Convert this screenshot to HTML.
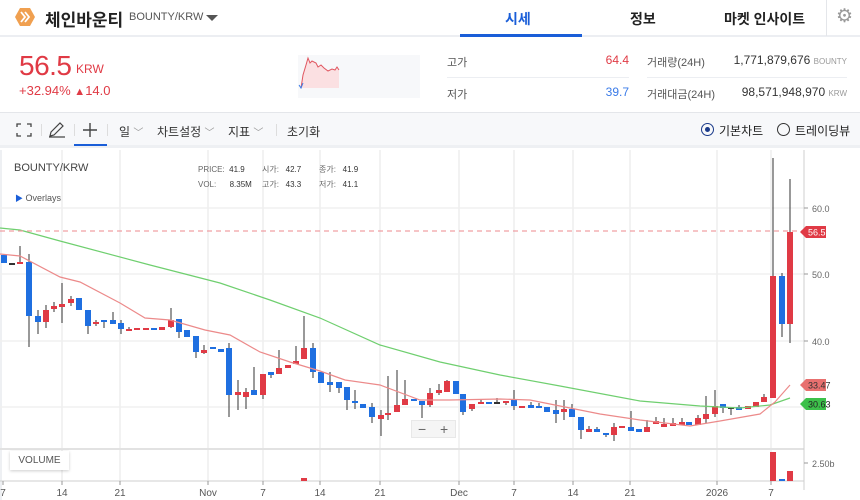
<!DOCTYPE html>
<html><head><meta charset="utf-8"><style>
*{margin:0;padding:0;box-sizing:border-box}
body{width:860px;height:500px;overflow:hidden;background:#fff;font-family:"Liberation Sans","Noto Sans CJK KR",sans-serif;color:#333;position:relative}
.a{position:absolute;white-space:nowrap}
</style></head><body>
<!-- header -->
<div class="a" style="left:0;top:0;width:860px;height:37px;border-bottom:2px solid #eceef2"></div>
<svg class="a" style="left:14px;top:6px" width="22" height="22" viewBox="0 0 22 22"><polygon points="6,2 16,2 21,11 16,20 6,20 1,11" fill="#f0a050"/><path d="M7 6l4 5-4 5M11 6l4 5-4 5" stroke="#fff" stroke-width="1.8" fill="none"/></svg>
<div class="a" style="left:45px;top:6px;font-size:17px;font-weight:bold;color:#222">체인바운티</div>
<div class="a" style="left:129px;top:11px;font-size:11px;color:#555">BOUNTY/KRW</div>
<div class="a" style="left:206px;top:15px;width:0;height:0;border-left:6px solid transparent;border-right:6px solid transparent;border-top:6px solid #555"></div>
<div class="a" style="left:505px;top:9px;font-size:14px;font-weight:bold;color:#1a5ed8">시세</div>
<div class="a" style="left:460px;top:34px;width:122px;height:3px;background:#1a5ed8"></div>
<div class="a" style="left:630px;top:9px;font-size:14px;font-weight:bold;color:#222">정보</div>
<div class="a" style="left:724px;top:9px;font-size:14px;font-weight:bold;color:#222">마켓 인사이트</div>
<div class="a" style="left:826px;top:0;width:1px;height:36px;background:#e4e6ea"></div>
<div class="a" style="left:836px;top:5px;font-size:19px;color:#999">⚙</div>
<!-- price -->
<div class="a" style="left:19px;top:50px;font-size:28px;color:#e03a45;letter-spacing:-0.5px">56.5</div>
<div class="a" style="left:76px;top:62px;font-size:12px;color:#e03a45">KRW</div>
<div class="a" style="left:19px;top:83px;font-size:13px;color:#e03a45">+32.94% <span style="font-size:11px">▲</span>14.0</div>
<svg class="a" style="left:298px;top:55px" width="122" height="43"><rect width="122" height="43" fill="#f7f8fa"/><path d="M3 33 L5 20 L8 10 L10 3 L12 8 L14 6 L18 8 L20 12 L23 10 L26 13 L30 16 L34 14 L37 15 L39 12 L41 15 L41 33 L3 33Z" fill="#fbe0e2"/><path d="M3 33 L5 20 L8 10 L10 3 L12 8 L14 6 L18 8 L20 12 L23 10 L26 13 L30 16 L34 14 L37 15 L39 12 L41 15" stroke="#e05660" fill="none"/><path d="M1 30 L3 33 L5 28" stroke="#3a7be8" fill="none"/></svg>
<div class="a" style="left:447px;top:54px;font-size:11px;color:#555">고가</div>
<div class="a" style="left:560px;top:53px;width:69px;text-align:right;font-size:12px;color:#e03a45">64.4</div>
<div class="a" style="left:447px;top:77px;width:182px;height:1px;background:#eceef2"></div>
<div class="a" style="left:447px;top:86px;font-size:11px;color:#555">저가</div>
<div class="a" style="left:560px;top:85px;width:69px;text-align:right;font-size:12px;color:#3a7be8">39.7</div>
<div class="a" style="left:647px;top:54px;font-size:11px;color:#555">거래량(24H)</div>
<div class="a" style="left:700px;top:53px;width:147px;text-align:right;font-size:12px;color:#333">1,771,879,676 <span style="font-size:8px;color:#999">BOUNTY</span></div>
<div class="a" style="left:647px;top:77px;width:200px;height:1px;background:#eceef2"></div>
<div class="a" style="left:647px;top:86px;font-size:11px;color:#555">거래대금(24H)</div>
<div class="a" style="left:700px;top:85px;width:147px;text-align:right;font-size:12px;color:#333">98,571,948,970 <span style="font-size:8px;color:#999">KRW</span></div>
<!-- toolbar -->
<div class="a" style="left:0;top:112px;width:860px;height:36px;background:#f7f8fa;border-top:1px solid #e4e6ea;border-bottom:3px solid #eef0f3"></div>
<svg class="a" style="left:16px;top:123px" width="16" height="14" fill="none" stroke="#444" stroke-width="1.3"><path d="M1 4V1h4M11 1h4v3M15 10v3h-4M5 13H1v-3"/></svg>
<svg class="a" style="left:47px;top:121px" width="20" height="18" fill="none" stroke="#444" stroke-width="1.2"><path d="M3 15l1-4 9-9 3 3-9 9-4 1zM2 16h16"/></svg>
<div class="a" style="left:74px;top:144px;width:33px;height:2px;background:#1a5ed8"></div>
<svg class="a" style="left:82px;top:122px" width="16" height="16" stroke="#444" stroke-width="1.4"><path d="M8 1v14M1 8h14"/></svg>
<div class="a" style="left:41px;top:124px;width:1px;height:12px;background:#ddd"></div>
<div class="a" style="left:74px;top:124px;width:1px;height:12px;background:#ddd"></div>
<div class="a" style="left:107px;top:124px;width:1px;height:12px;background:#ddd"></div>
<div class="a" style="left:276px;top:124px;width:1px;height:12px;background:#ddd"></div>
<div class="a" style="left:119px;top:123px;font-size:12px;color:#333">일 <span style="color:#999;font-size:10px">﹀</span></div>
<div class="a" style="left:157px;top:123px;font-size:12px;color:#333">차트설정 <span style="color:#999;font-size:10px">﹀</span></div>
<div class="a" style="left:228px;top:123px;font-size:12px;color:#333">지표 <span style="color:#999;font-size:10px">﹀</span></div>
<div class="a" style="left:287px;top:123px;font-size:12px;color:#333">초기화</div>
<div class="a" style="left:701px;top:123px;width:13px;height:13px;border:1.5px solid #1a3a8a;border-radius:50%"></div>
<div class="a" style="left:705px;top:127px;width:5px;height:5px;background:#1a3a8a;border-radius:50%"></div>
<div class="a" style="left:719px;top:122px;font-size:12px;color:#222">기본차트</div>
<div class="a" style="left:777px;top:123px;width:13px;height:13px;border:1.3px solid #333;border-radius:50%"></div>
<div class="a" style="left:795px;top:122px;font-size:12px;color:#222">트레이딩뷰</div>
<!-- chart -->
<svg id="ch" class="a" style="left:0;top:150px" width="860" height="350"></svg>
<div class="a" style="left:14px;top:162px;font-size:11px;color:#444">BOUNTY/KRW</div>
<div class="a" style="left:198px;top:162px;font-size:8px;color:#666;line-height:15px">PRICE:&nbsp; <span style="color:#333">41.9</span><br>VOL:&nbsp;&nbsp;&nbsp;&nbsp;&nbsp; <span style="color:#333">8.35M</span></div>
<div class="a" style="left:262px;top:162px;font-size:8px;color:#666;line-height:15px">시가: &nbsp;&nbsp;<span style="color:#333">42.7</span><br>고가: &nbsp;&nbsp;<span style="color:#333">43.3</span></div>
<div class="a" style="left:319px;top:162px;font-size:8px;color:#666;line-height:15px">종가: &nbsp;&nbsp;<span style="color:#333">41.9</span><br>저가: &nbsp;&nbsp;<span style="color:#333">41.1</span></div>
<div class="a" style="left:15px;top:193px;font-size:9px;color:#555"><span style="color:#1a5ed8;font-size:8px">▶</span> Overlays</div>
<div class="a" style="left:10px;top:451px;width:59px;height:19px;background:#fff;box-shadow:0 1px 3px rgba(0,0,0,.2);font-size:10px;color:#555;text-align:center;line-height:19px">VOLUME</div>
<div class="a" style="left:411px;top:420px;width:45px;height:18px;background:#f5f5f5;border:1px solid #e8e8e8;font-size:14px;color:#666;line-height:16px"><span style="position:absolute;left:6px">−</span><span style="position:absolute;left:28px">+</span></div>
<script>
var s='',Y=150;
function L(x1,y1,x2,y2,c,w,d){s+='<line x1="'+x1+'" y1="'+(y1-Y)+'" x2="'+x2+'" y2="'+(y2-Y)+'" stroke="'+c+'" stroke-width="'+(w||1)+'"'+(d?' stroke-dasharray="'+d+'"':'')+'/>';}
s+='<rect x="0" y="0" width="2" height="350" fill="#eef0f3"/>';
[62,120,208,263,320,380,459,514,573,630,717,771].forEach(function(x){L(x,150,x,481,'#eeeeee',1.5)});
[208,274,341,407].forEach(function(y){L(0,y,804,y,'#f0f0f0',1.5)});
L(0,449,804,449,'#e2e2e2',2);L(0,481,804,481,'#cfcfcf',1);L(804,150,804,490,'#cfcfcf',1);
[208,274,341].forEach(function(y,i){L(804,y,808,y,'#999');s+='<text x="812" y="'+(y+4-Y)+'" font-size="9" fill="#666">'+['60.0','50.0','40.0'][i]+'</text>'});
L(804,463,808,463,'#999');s+='<text x="812" y="'+(467-Y)+'" font-size="9" fill="#666">2.50b</text>';
function P(pts,c){s+='<polyline fill="none" stroke="'+c+'" stroke-width="1.2" points="'+pts.map(function(p){return p[0]+','+(p[1]-Y)}).join(' ')+'"/>';}
var R='#e03a45',B='#1f6fe0';
var C=[[4,255,263,B,0,0],[12,263,264,'#333',0,0],[20,262,264,R,246,264],[29,262,316,B,254,347],[38,316,322,B,310,334],[46,310,322,R,305,328],[54,306,309,R,302,312],[62,304,307,R,283,323],[71,299,303,R,296,306],[79,298,310,B,0,0],[88,310,326,B,0,334],[96,322,323,R,320,326],[104,320,322,B,0,328],[113,320,324,B,312,0],[121,323,329,B,320,334],[129,329,331,R,327,0],[137,328,330,R,0,0],[146,328,330,R,0,0],[154,328,330,B,0,0],[162,327,330,R,0,0],[171,320,327,R,308,328],[179,319,332,B,0,338],[187,330,337,B,0,0],[196,336,352,B,0,358],[204,350,353,R,345,354],[213,347,349,B,0,0],[221,349,352,B,0,0],[229,348,395,B,343,417],[238,392,395,R,380,410],[246,392,397,R,388,409],[254,390,395,B,367,0],[263,374,395,R,0,399],[271,372,375,B,0,378],[279,368,374,R,350,0],[288,365,368,R,0,0],[296,361,364,R,346,0],[304,348,359,R,316,0],[313,348,372,B,343,378],[321,372,383,B,0,0],[330,382,385,B,372,392],[339,382,388,B,0,393],[347,387,400,B,0,410],[355,401,403,B,390,409],[363,404,408,B,0,0],[372,407,417,B,403,423],[381,415,419,R,410,436],[388,413,415,R,376,420],[397,405,412,R,370,0],[405,399,405,R,380,0],[414,399,401,B,0,0],[422,401,405,B,0,418],[430,393,405,R,388,407],[439,390,393,R,384,395],[447,381,392,R,380,0],[456,381,394,B,0,0],[463,394,412,B,0,415],[472,404,409,R,0,411],[481,402,403,R,399,0],[489,402,404,B,0,0],[497,402,403,'#333',398,0],[506,401,403,R,0,405],[514,400,406,B,390,410],[522,406,408,R,0,0],[531,405,408,B,402,0],[539,406,408,B,403,0],[547,407,412,B,0,0],[556,410,414,B,400,423],[564,409,412,R,400,420],[572,409,417,B,404,0],[581,417,430,B,0,439],[589,429,432,R,426,0],[597,429,432,B,427,0],[606,433,435,B,0,437],[614,427,435,R,423,441],[622,426,428,R,0,0],[631,427,431,B,411,0],[639,429,432,B,0,0],[647,427,432,R,420,0],[656,421,424,R,417,0],[664,424,427,R,418,0],[673,423,426,R,418,0],[682,422,425,R,418,0],[689,422,425,B,0,0],[698,418,425,R,415,0],[706,414,419,R,396,423],[715,406,414,R,390,417],[723,404,408,B,0,413],[731,407,408,'#333',0,415],[739,407,410,B,405,0],[748,406,409,R,0,0],[756,402,407,R,0,0],[764,397,402,R,394,0],[773,276,398,R,158,0],[782,276,324,B,273,337],[790,232,324,R,179,343]];
C.forEach(function(c){var x=c[0];if(c[4]||c[5])L(x,c[4]||c[1],x,c[5]||c[2],'#555',1.2);s+='<rect x="'+(x-3)+'" y="'+(c[1]-Y)+'" width="6" height="'+Math.max(2,c[2]-c[1])+'" fill="'+c[3]+'"/>';});
P([[0,228],[20,230],[60,241],[150,265],[220,283],[270,300],[320,318],[380,345],[440,362],[500,375],[560,386],[640,401],[700,406],[740,408],[770,405],[790,398]],'#6fcf6f');
P([[0,254],[20,256],[60,277],[80,282],[120,303],[145,318],[170,320],[205,330],[230,335],[260,352],[290,362],[320,371],[345,380],[380,385],[420,400],[450,400],[500,399],[530,400],[560,406],[600,414],[640,420],[690,426],[720,421],[760,414],[775,402],[790,385]],'#ec8a8a');
L(0,231,804,231,'#f0a0a5',1.2,'5,4');
s+='<rect x="301" y="'+(478-Y)+'" width="6" height="3" fill="'+R+'"/>';
s+='<rect x="770" y="'+(452-Y)+'" width="6" height="29" fill="'+R+'"/><rect x="779" y="'+(479-Y)+'" width="6" height="2" fill="'+B+'"/><rect x="787" y="'+(471-Y)+'" width="6" height="10" fill="'+R+'"/>';
function T(y,c,t,tc){s+='<path d="M800 '+(y-Y)+' L806 '+(y-6-Y)+' H826 V'+(y+6-Y)+' H806Z" fill="'+c+'"/><text x="808" y="'+(y+3.5-Y)+'" font-size="9" fill="'+tc+'">'+t+'</text>';}
T(232,'#e03a45','56.5','#fff');T(385,'#e8706f','33.47','#333');T(404,'#3cc04a','30.63','#222');
[[3,'7'],[62,'14'],[120,'21'],[208,'Nov'],[263,'7'],[320,'14'],[380,'21'],[459,'Dec'],[514,'7'],[573,'14'],[630,'21'],[717,'2026'],[771,'7']].forEach(function(t){L(t[0],481,t[0],485,'#999');s+='<text x="'+t[0]+'" y="'+(496-Y)+'" font-size="10" fill="#555" text-anchor="middle">'+t[1]+'</text>'});
document.getElementById('ch').innerHTML=s;
</script>
</body></html>
